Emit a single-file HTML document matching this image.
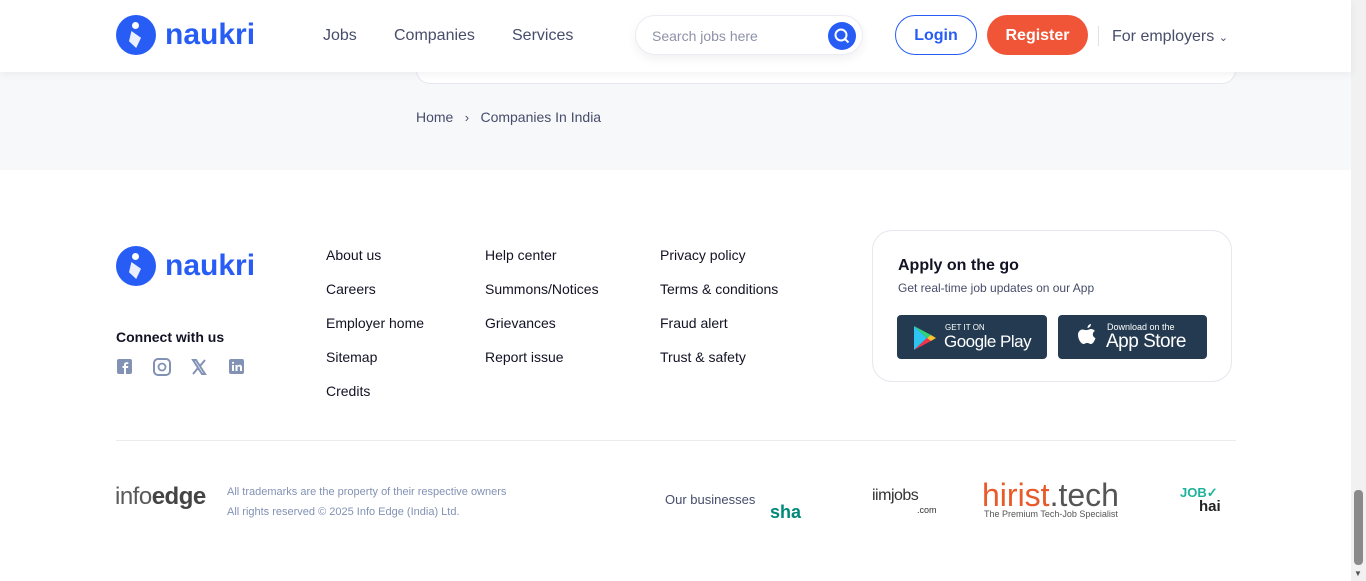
<!DOCTYPE html>
<html><head><meta charset="utf-8"><style>
*{margin:0;padding:0;box-sizing:border-box}
body{width:1366px;height:581px;overflow:hidden;font-family:"Liberation Sans",sans-serif;background:#fff;position:relative;color:#121224}
.a{position:absolute}
.hdr{left:0;top:0;width:1351px;height:72px;background:#fff;box-shadow:0 2px 8px rgba(0,0,0,.06);z-index:5}
.gray{left:0;top:72px;width:1351px;height:98px;background:#f7f8fa}
.nav{font-size:16px;color:#474d6a;top:26px}
.logo{display:flex;align-items:center}
.logo .c{width:40px;height:40px;border-radius:50%;background:#275df5;position:relative}
.logo .t{color:#275df5;font-weight:bold;font-size:30px;margin-left:9px;letter-spacing:0}
.lk{font-size:14px;color:#121224}
.btn{background:#233a50;border-radius:4px;color:#fff;display:flex;align-items:center}
</style></head><body>
<div class="a hdr">
  <div class="a logo" style="left:116px;top:15px"><div class="c"><div class="a" style="left:16px;top:7px;width:7px;height:7px;border-radius:50%;background:#fff"></div><div class="a" style="left:13px;top:16px;width:12px;height:17px;background:#fff;clip-path:polygon(20% 0,100% 40%,60% 100%,0 60%);opacity:.9"></div></div><span class="t">naukri</span></div>
  <div class="a nav" style="left:323px;top:27px">Jobs</div>
  <div class="a nav" style="left:394px;top:27px">Companies</div>
  <div class="a nav" style="left:512px;top:27px">Services</div>
  <div class="a" style="left:635px;top:15px;width:228px;height:40px;border:1px solid #ebebf3;border-radius:20px;box-shadow:0 4px 10px rgba(0,0,0,.06)">
    <span class="a" style="left:16px;top:12px;font-size:14px;color:#8d92a8">Search jobs here</span>
    <div class="a" style="left:192px;top:6px;width:28px;height:28px;border-radius:50%;background:#275df5"><svg width="28" height="28"><circle cx="13" cy="13" r="5.5" stroke="#fff" stroke-width="2" fill="none"/><path d="M17 17l3.5 3.5" stroke="#fff" stroke-width="2"/></svg></div>
  </div>
  <div class="a" style="left:895px;top:15px;width:82px;height:40px;border:1px solid #275df5;border-radius:20px;color:#275df5;font-weight:bold;font-size:16px;text-align:center;line-height:40px">Login</div>
  <div class="a" style="left:987px;top:15px;width:101px;height:40px;background:#f05537;border-radius:20px;color:#fff;font-weight:bold;font-size:16px;text-align:center;line-height:41px">Register</div>
  <div class="a" style="left:1098px;top:26px;width:1px;height:20px;background:#e0e0e8"></div>
  <div class="a" style="left:1112px;top:28px;font-size:16px;color:#474d6a">For employers <span style="font-size:11px">&#8964;</span></div>
</div>
<div class="a gray"></div>
<div class="a" style="left:416px;top:60px;width:820px;height:24px;background:#fff;border:1px solid #e6e7ef;border-top:none;border-radius:0 0 14px 14px;z-index:1"></div>
<div class="a" style="left:416px;top:109px;font-size:14px;color:#474d6a">Home &nbsp;<span style="font-size:13px">&nbsp;&#8250;&nbsp;</span>&nbsp; Companies In India</div>

<div class="a logo" style="left:116px;top:246px"><div class="c"><div class="a" style="left:16px;top:7px;width:7px;height:7px;border-radius:50%;background:#fff"></div><div class="a" style="left:13px;top:16px;width:12px;height:17px;background:#fff;clip-path:polygon(20% 0,100% 40%,60% 100%,0 60%);opacity:.9"></div></div><span class="t">naukri</span></div>
<div class="a" style="left:116px;top:329px;font-size:14px;font-weight:bold">Connect with us</div>
<svg class="a" style="left:116px;top:358px" width="140" height="18">
<rect x="1" y="1" width="15" height="15" rx="2" fill="#8292b4"/><path d="M10 16v-6h2l.3-2H10V7c0-.6.2-1 1-1h1.3V4.2H10.5c-1.7 0-2.5 1-2.5 2.5V8H6.5v2H8v6z" fill="#fff"/>
<rect x="38" y="1" width="16" height="16" rx="4" fill="none" stroke="#8292b4" stroke-width="2"/><circle cx="46" cy="9" r="3.5" fill="none" stroke="#8292b4" stroke-width="1.8"/>
<path d="M77 2h3l9 14h-3z M77 16l5-6 M84 8l5-6" stroke="#8292b4" stroke-width="2" fill="none"/>
<rect x="113" y="1" width="15" height="15" rx="2" fill="#8292b4"/><path d="M116 7h2v6h-2z M119.5 7h2v1c.5-.8 1.3-1.2 2.2-1.2 1.5 0 2.3 1 2.3 2.6V13h-2v-3.3c0-.8-.3-1.2-1-1.2s-1.5.4-1.5 1.3V13h-2z" fill="#fff"/><circle cx="117" cy="4.8" r="1.1" fill="#fff"/>
</svg>
<div class="a lk" style="left:326px;top:238px;line-height:34px">About us<br>Careers<br>Employer home<br>Sitemap<br>Credits</div>
<div class="a lk" style="left:485px;top:238px;line-height:34px">Help center<br>Summons/Notices<br>Grievances<br>Report issue</div>
<div class="a lk" style="left:660px;top:238px;line-height:34px">Privacy policy<br>Terms &amp; conditions<br>Fraud alert<br>Trust &amp; safety</div>
<div class="a" style="left:872px;top:230px;width:360px;height:152px;border:1px solid #e6e7ef;border-radius:20px">
  <div class="a" style="left:25px;top:26px;font-size:16px;font-weight:bold">Apply on the go</div>
  <div class="a" style="left:25px;top:50px;font-size:12px;color:#474d6a">Get real-time job updates on our App</div>
  <div class="a btn" style="left:24px;top:84px;width:150px;height:44px">
    <svg class="a" style="left:16px;top:10px" width="24" height="26"><path d="M1 1l13 12L1 25z" fill="#2ec4f1"/><path d="M1 1l17 9-4 3z" fill="#33d375"/><path d="M1 25l17-9-4-3z" fill="#f43249"/><path d="M18 10l5 3-5 3-4-3z" fill="#fdc12e"/></svg>
    <div class="a" style="left:48px;top:8px;font-size:8px">GET IT ON</div>
    <div class="a" style="left:47px;top:17px;font-size:17px;letter-spacing:-.5px">Google Play</div>
  </div>
  <div class="a btn" style="left:185px;top:84px;width:149px;height:44px">
    <svg class="a" style="left:18px;top:8px" width="22" height="26"><path d="M15 1c0 2-1.5 4-3.5 4 0-2 1.5-4 3.5-4zM11 7c1.5 0 2.5-1 4-1 1.3 0 3 .7 3.8 2-3 1.7-2.5 6 .7 7-.7 2.5-2.5 6-4.5 6-1.5 0-2-1-3.8-1s-2.4 1-3.8 1C5 21 2 16 2 12c0-3.5 2.3-5.5 4.5-5.5 1.6 0 3 1 4.5.5z" fill="#fff"/></svg>
    <div class="a" style="left:49px;top:7px;font-size:9px">Download on the</div>
    <div class="a" style="left:48px;top:16px;font-size:19px;letter-spacing:-.5px">App Store</div>
  </div>
</div>
<div class="a" style="left:116px;top:440px;width:1120px;height:1px;background:#ebebf0"></div>
<div class="a" style="left:115px;top:483px;font-size:24px;color:#5a5a5a;letter-spacing:-.5px">info<b style="color:#444">edge</b></div>
<div class="a" style="left:227px;top:482px;font-size:11px;color:#8292b4;line-height:20px">All trademarks are the property of their respective owners<br>All rights reserved © 2025 Info Edge (India) Ltd.</div>
<div class="a" style="left:665px;top:492px;font-size:13px;color:#474d6a">Our businesses</div>
<div class="a" style="left:770px;top:502px;font-size:18px;font-weight:bold;color:#00897b">sha</div>
<div class="a" style="left:872px;top:487px;font-size:16px;color:#333;letter-spacing:-.5px">iimjobs</div>
<div class="a" style="left:917px;top:505px;font-size:9px;color:#333">.com</div>
<div class="a" style="left:982px;top:477px;font-size:32px;color:#e85a2a">hirist<span style="color:#555">.tech</span></div>
<div class="a" style="left:984px;top:509px;font-size:9px;color:#555">The Premium Tech-Job Specialist</div>
<div class="a" style="left:1180px;top:485px;font-size:13px;font-weight:bold;color:#1eb39a">JOB<span style="color:#1eb39a">✓</span></div>
<div class="a" style="left:1199px;top:498px;font-size:15px;font-weight:bold;color:#222">hai</div>
<div class="a" style="left:1351px;top:0;width:15px;height:581px;background:#f1f1f1"></div>
<div class="a" style="left:1354px;top:490px;width:9px;height:75px;background:#8a8a8a;border-radius:4px"></div>
<div class="a" style="left:1354px;top:569px;font-size:8px;color:#555">▼</div>
</body></html>
